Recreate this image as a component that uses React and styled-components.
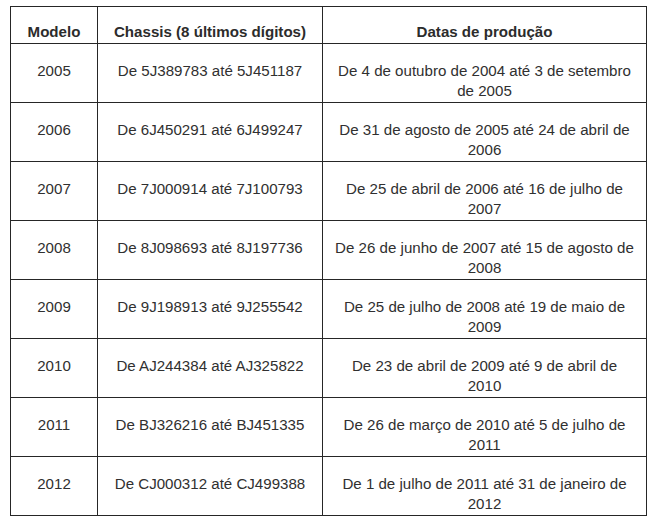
import styled, { createGlobalStyle } from "styled-components";

const GlobalStyle = createGlobalStyle`
  html, body {
    margin: 0;
    padding: 0;
    background: #ffffff;
  }
  body {
    font-family: "Liberation Sans", Arial, sans-serif;
  }
`;

const rows = [
  {
    modelo: "2005",
    chassis: "De 5J389783 até 5J451187",
    datas: ["De 4 de outubro de 2004 até 3 de setembro", "de 2005"],
  },
  {
    modelo: "2006",
    chassis: "De 6J450291 até 6J499247",
    datas: ["De 31 de agosto de 2005 até 24 de abril de", "2006"],
  },
  {
    modelo: "2007",
    chassis: "De 7J000914 até 7J100793",
    datas: ["De 25 de abril de 2006 até 16 de julho de", "2007"],
  },
  {
    modelo: "2008",
    chassis: "De 8J098693 até 8J197736",
    datas: ["De 26 de junho de 2007 até 15 de agosto de", "2008"],
  },
  {
    modelo: "2009",
    chassis: "De 9J198913 até 9J255542",
    datas: ["De 25 de julho de 2008 até 19 de maio de", "2009"],
  },
  {
    modelo: "2010",
    chassis: "De AJ244384 até AJ325822",
    datas: ["De 23 de abril de 2009 até 9 de abril de", "2010"],
  },
  {
    modelo: "2011",
    chassis: "De BJ326216 até BJ451335",
    datas: ["De 26 de março de 2010 até 5 de julho de", "2011"],
  },
  {
    modelo: "2012",
    chassis: "De CJ000312 até CJ499388",
    datas: ["De 1 de julho de 2011 até 31 de janeiro de", "2012"],
  },
];

const App = () => {
  return (
    <PageWrap>
      <GlobalStyle />
      <Table>
        <colgroup>
          <col style={{ width: 87 }} />
          <col style={{ width: 225 }} />
          <col style={{ width: 324 }} />
        </colgroup>
        <thead>
          <tr>
            <HeadCell>Modelo</HeadCell>
            <HeadCell>Chassis (8 últimos dígitos)</HeadCell>
            <HeadCell>Datas de produção</HeadCell>
          </tr>
        </thead>
        <tbody>
          {rows.map((row) => (
            <tr key={row.modelo}>
              <Cell>{row.modelo}</Cell>
              <Cell>{row.chassis}</Cell>
              <Cell>
                {row.datas.map((line) => (
                  <Line key={line}>{line}</Line>
                ))}
              </Cell>
            </tr>
          ))}
        </tbody>
      </Table>
    </PageWrap>
  );
};

const PageWrap = styled.div`
  padding: 6px 0 0 10px;
  width: 657px;
  height: 525px;
  box-sizing: border-box;
  background: #ffffff;
`;

const Table = styled.table`
  width: 637px;
  table-layout: fixed;
  border-collapse: collapse;
  color: #303030;
  font-size: 15.1px;
  line-height: 20px;
`;

const HeadCell = styled.th`
  border: 1px solid #262626;
  height: 37px;
  padding: 15px 4px 1px;
  box-sizing: border-box;
  font-weight: bold;
  color: #2c2c2c;
  text-align: center;
  vertical-align: top;
  white-space: nowrap;
`;

const Cell = styled.td`
  border: 1px solid #262626;
  height: 59px;
  padding: 17px 4px 1px;
  box-sizing: border-box;
  text-align: center;
  vertical-align: top;
  white-space: nowrap;
`;

const Line = styled.div`
  display: block;
`;

export default App;
